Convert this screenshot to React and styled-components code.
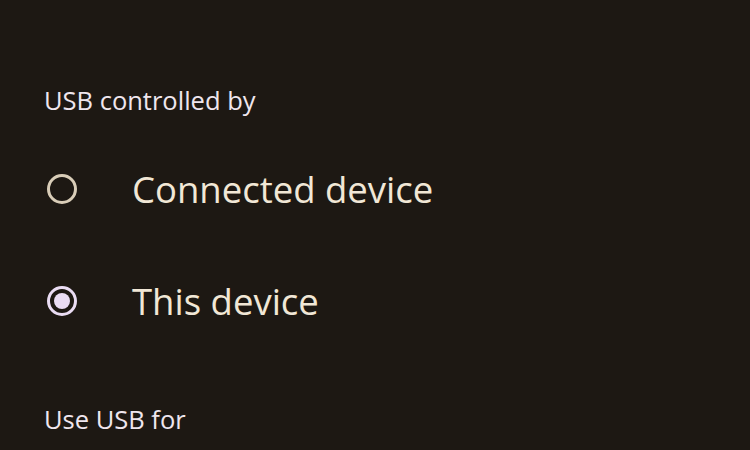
import React, { useState } from 'react';
import styled, { createGlobalStyle } from 'styled-components';

const GlobalStyle = createGlobalStyle`
  html, body {
    margin: 0;
    padding: 0;
    background: #1d1813;
  }
  body {
    font-family: 'Open Sans', 'Noto Sans', sans-serif;
  }
`;

const Screen = styled.div`
  width: 750px;
  height: 450px;
  overflow: hidden;
  background: #1d1813;
  padding: 84px 44px 0;
  box-sizing: border-box;
`;

const SectionTitle = styled.h3`
  margin: 0;
  font-size: 25.5px;
  line-height: 32px;
  font-weight: 500;
  color: #efe6ee;
`;

const Options = styled.div`
  display: flex;
  flex-direction: column;
  margin: 17px 0 46px;
`;

const Row = styled.label`
  display: flex;
  align-items: center;
  height: 112px;
  gap: 55px;
  cursor: pointer;
`;

const Radio = styled.span`
  flex: none;
  width: 30px;
  height: 30px;
  margin-left: 3px;
  border-radius: 50%;
  box-sizing: border-box;
  border: 3px solid ${(p) => (p.$checked ? '#eadcf3' : '#d9cdb8')};
  display: flex;
  align-items: center;
  justify-content: center;

  &::after {
    content: '';
    width: 16px;
    height: 16px;
    border-radius: 50%;
    background: #eadcf3;
    display: ${(p) => (p.$checked ? 'block' : 'none')};
  }
`;

const OptionText = styled.span`
  font-size: 36.5px;
  line-height: 44px;
  color: #f1e7d6;
  font-weight: 400;
`;

const choices = ['Connected device', 'This device'];

export default function App() {
  const [selected, setSelected] = useState('This device');

  return (
    <>
      <GlobalStyle />
      <Screen>
        <SectionTitle>USB controlled by</SectionTitle>
        <Options>
          {choices.map((c) => (
            <Row key={c} onClick={() => setSelected(c)}>
              <Radio $checked={selected === c} />
              <OptionText>{c}</OptionText>
            </Row>
          ))}
        </Options>
        <SectionTitle>Use USB for</SectionTitle>
      </Screen>
    </>
  );
}
